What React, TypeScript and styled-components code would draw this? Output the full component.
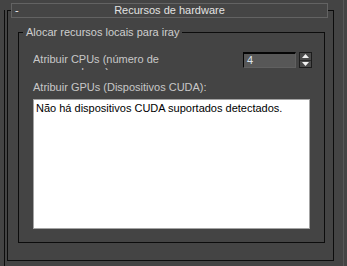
import React from "react";
import styled, { createGlobalStyle } from "styled-components";

const Global = createGlobalStyle`
  html, body { margin: 0; padding: 0; background: #444444; }
  body { font-family: "Liberation Sans", Arial, sans-serif; font-size: 11px; }
  * { box-sizing: border-box; }
`;

const Page = styled.div`
  width: 347px;
  height: 266px;
  display: flex;
  background: #444444;
  overflow: hidden;
`;

const Main = styled.div`
  width: 343px;
  height: 100%;
  padding: 10px 0 0 4px;
  display: flex;
`;

const SideStrip = styled.div`
  flex: 1;
  border-left: 1px solid #575757;
`;

const Panel = styled.div`
  flex: 1;
  border-left: 1px solid #0c0c0c;
  padding-left: 2px;
`;

const Rollout = styled.div`
  width: 327px;
  height: 251px;
  border: 1px solid #0c0c0c;
  display: flex;
  flex-direction: column;
`;

const Header = styled.div`
  margin: -8px 5px 0 3px;
  height: 15px;
  border: 1px solid #636363;
  background: #454545;
  display: grid;
  grid-template-columns: 1fr auto 1fr;
  align-items: center;
  color: #e2e2e2;
  line-height: 13px;
`;

const Collapse = styled.span`
  padding-left: 3px;
  color: #f0f0f0;
`;

const Title = styled.span`
  white-space: nowrap;
`;

const Group = styled.div`
  position: relative;
  margin: 14px 8px 0 10px;
  height: 211px;
  border: 1px solid #0c0c0c;
  padding: 19px 12px 0 14px;
  display: flex;
  flex-direction: column;
  color: #c8c8c8;
  line-height: 13px;
`;

const Legend = styled.span`
  position: absolute;
  top: -7px;
  left: 4px;
  padding: 0 3px;
  background: #444444;
  color: #cfcfcf;
  white-space: nowrap;
`;

const CpuRow = styled.div`
  display: flex;
  align-items: flex-start;
`;

const ClippedLabel = styled.div`
  width: 140px;
  margin-top: 1px;
  height: 17px;
  overflow: hidden;
`;

const Spinner = styled.div`
  margin-left: auto;
  display: flex;
  gap: 3px;
`;

const Field = styled.div`
  width: 53px;
  height: 16px;
  background: #575757;
  border-top: 2px solid #050505;
  border-left: 1px solid #050505;
  border-right: 1px solid #606060;
  border-bottom: 1px solid #606060;
  padding-left: 3px;
  color: #dde4ee;
  line-height: 12px;
`;

const SpinButtons = styled.div`
  width: 13px;
  height: 16px;
  border: 1px solid #1c1c1c;
  background: #4a4a4a;
  display: flex;
  flex-direction: column;
`;

const SpinHalf = styled.div<{ $top?: boolean }>`
  flex: 1;
  display: flex;
  align-items: center;
  justify-content: center;
  border-bottom: ${(p) => (p.$top ? "1px solid #2a2a2a" : "none")};
`;

const GpuLabel = styled.div`
  margin-top: 11px;
`;

const ListBox = styled.div`
  margin-top: 5px;
  width: 277px;
  height: 130px;
  border: 1px solid #a3a3a3;
  background: #ffffff;
  color: #000000;
  padding: 2px 2px;
  line-height: 13px;
`;

const Arrow = ({ up }: { up?: boolean }) => (
  <svg width="7" height="4" viewBox="0 0 7 4">
    {up ? (
      <polygon points="0,4 7,4 3.5,0" fill="#f2f2f2" />
    ) : (
      <polygon points="0,0 7,0 3.5,4" fill="#f2f2f2" />
    )}
  </svg>
);

export default function App() {
  return (
    <>
      <Global />
      <Page>
        <Main>
          <Panel>
            <Rollout>
              <Header>
                <Collapse>-</Collapse>
                <Title>Recursos de hardware</Title>
                <span />
              </Header>
              <Group>
                <Legend>Alocar recursos locais para iray</Legend>
                <CpuRow>
                  <ClippedLabel>Atribuir CPUs (número de processadores):</ClippedLabel>
                  <Spinner>
                    <Field>4</Field>
                    <SpinButtons>
                      <SpinHalf $top>
                        <Arrow up />
                      </SpinHalf>
                      <SpinHalf>
                        <Arrow />
                      </SpinHalf>
                    </SpinButtons>
                  </Spinner>
                </CpuRow>
                <GpuLabel>Atribuir GPUs (Dispositivos CUDA):</GpuLabel>
                <ListBox>Não há dispositivos CUDA suportados detectados.</ListBox>
              </Group>
            </Rollout>
          </Panel>
        </Main>
        <SideStrip />
      </Page>
    </>
  );
}
